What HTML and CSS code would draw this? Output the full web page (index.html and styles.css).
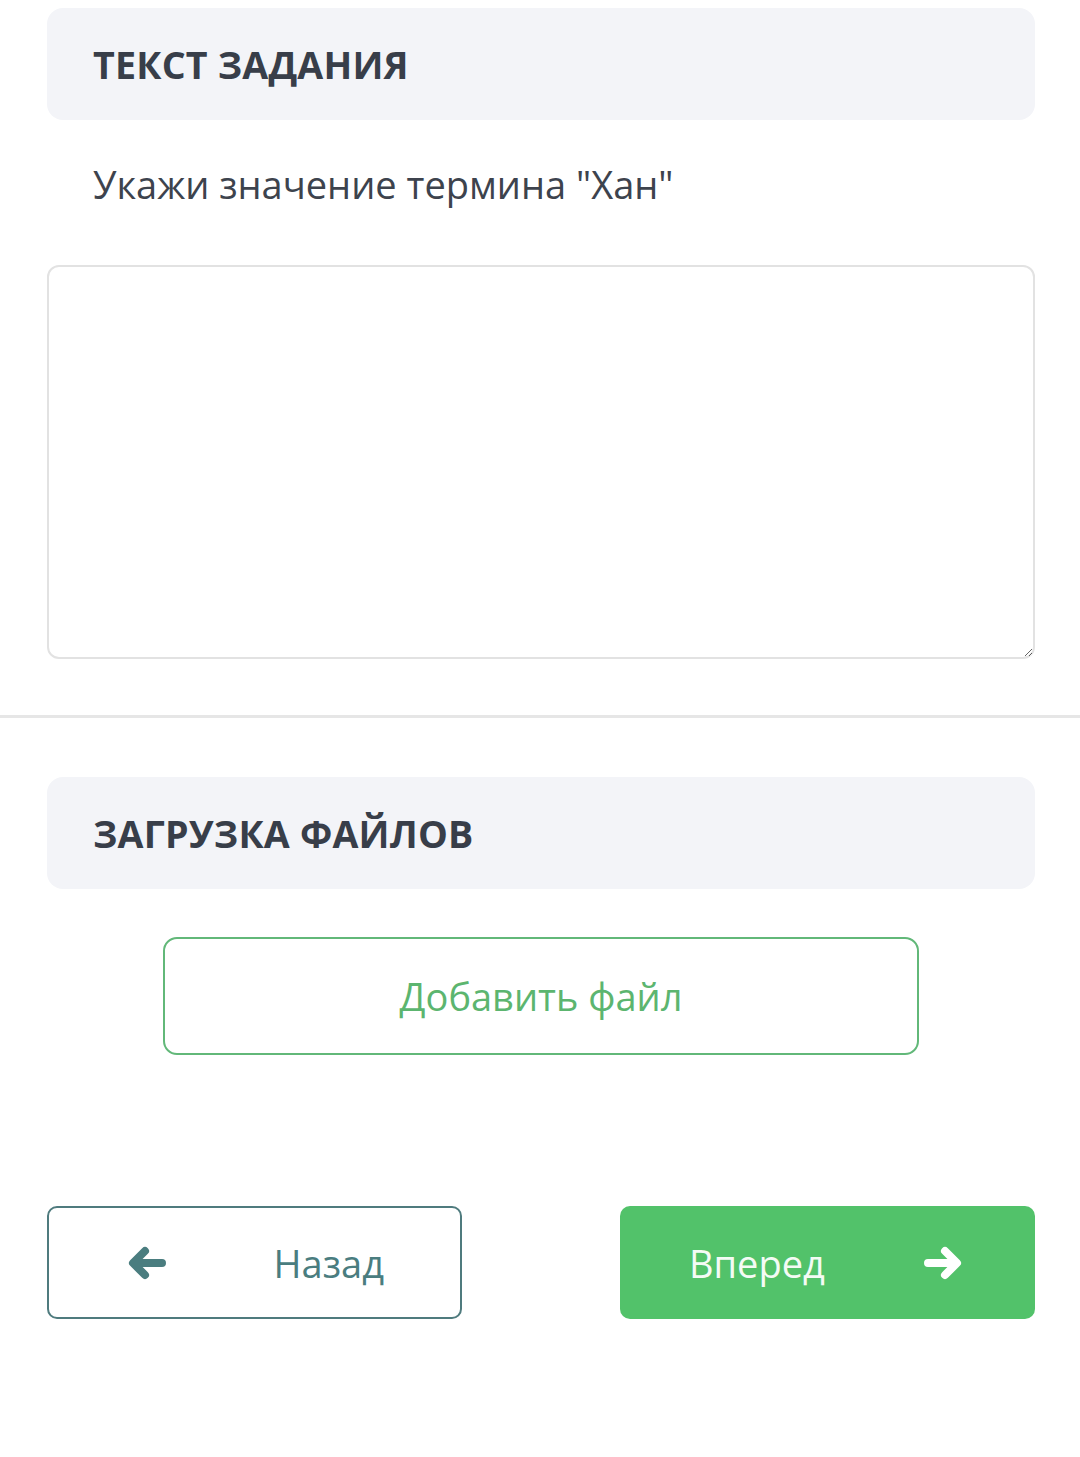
FILE: index.html
```html
<!DOCTYPE html>
<html lang="ru">
<head>
    <meta charset="UTF-8">
    <meta name="viewport" content="width=device-width, initial-scale=1.0">
    <title>Задание</title>
    <link rel="stylesheet" href="styles.css">
</head>
<body>
    <div class="section">
        <div class="section-head">ТЕКСТ ЗАДАНИЯ</div>
        <p class="task-text">Укажи значение термина "Хан"</p>
        <textarea class="answer"></textarea>
    </div>

    <div class="divider"></div>

    <div class="section upload">
        <div class="section-head">ЗАГРУЗКА ФАЙЛОВ</div>
        <button class="add-file">Добавить файл</button>
    </div>

    <div class="nav">
        <button class="nav-btn back">
            <svg width="40" height="36" viewBox="0 0 40 36">
                <path d="M35 18H7M18 6L6 18l12 12" fill="none" stroke="#4a7d7f" stroke-width="8" stroke-linecap="round" stroke-linejoin="round"/>
            </svg>
            <span>Назад</span>
        </button>
        <button class="nav-btn next">
            <span>Вперед</span>
            <svg width="40" height="36" viewBox="0 0 40 36">
                <path d="M5 18h28M22 6l12 12-12 12" fill="none" stroke="#ffffff" stroke-width="8" stroke-linecap="round" stroke-linejoin="round"/>
            </svg>
        </button>
    </div>
</body>
</html>
```

FILE: styles.css
```css
body {
    margin: 0;
    font-family: "Open Sans", "Noto Sans", sans-serif;
    background-color: #ffffff;
    color: #3d434d;
}
.section {
    padding: 8px 45px 0 47px;
}
.section-head {
    height: 112px;
    display: flex;
    align-items: center;
    padding-left: 46px;
    background-color: #f3f4f8;
    border-radius: 16px;
    font-size: 37.6px;
    font-weight: bold;
    color: #383e49;
    letter-spacing: 0.2px;
}
.task-text {
    margin: 38px 0 0 46px;
    font-size: 38px;
    line-height: 52px;
    color: #3d434d;
}
.answer {
    display: block;
    width: 100%;
    height: 394px;
    margin-top: 55px;
    border: 2px solid #e2e2e2;
    border-radius: 12px;
    box-sizing: border-box;
    background-color: #ffffff;
}
.divider {
    height: 3px;
    margin-top: 56px;
    background-color: #e6e6e6;
}
.upload {
    padding-top: 59px;
}
.add-file {
    display: block;
    width: 756px;
    height: 118px;
    margin: 48px 0 0 116px;
    background-color: #ffffff;
    border: 2px solid #62b879;
    border-radius: 14px;
    font-family: inherit;
    font-size: 38px;
    color: #5cb56f;
    cursor: pointer;
}
.nav {
    display: flex;
    justify-content: space-between;
    padding: 0 45px 0 47px;
    margin-top: 151px;
}
.nav-btn {
    width: 415px;
    height: 113px;
    display: flex;
    align-items: center;
    justify-content: space-between;
    border-radius: 10px;
    box-sizing: border-box;
    font-family: inherit;
    font-size: 38px;
    cursor: pointer;
}
.back {
    padding: 0 76px 0 78px;
    background-color: #ffffff;
    border: 2px solid #4f7b7e;
    color: #4a7d7f;
}
.next {
    padding: 0 72px 0 69px;
    background-color: #52c26a;
    border: none;
    color: #f4fbf5;
}
```
